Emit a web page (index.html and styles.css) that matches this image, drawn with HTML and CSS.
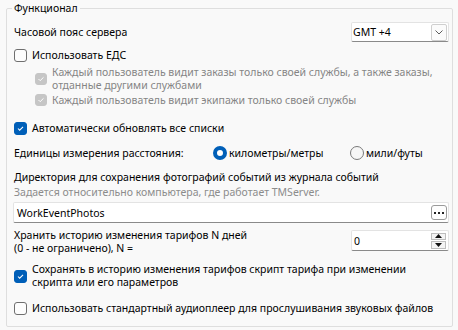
FILE: index.html
```html
<!DOCTYPE html>
<html lang="ru">
<head>
  <meta charset="UTF-8" />
  <title>Функционал</title>
  <link rel="stylesheet" href="styles.css">
</head>
<body>
  <fieldset class="group">
    <legend>Функционал</legend>

    <div class="row row-tz">
      <span>Часовой пояс сервера</span>
      <div class="combo">
        <span class="combo-text">GMT +4</span>
        <span class="combo-btn">
          <svg width="8" height="5" viewBox="0 0 8 5"><path d="M0.5 0.5 L4 4 L7.5 0.5" fill="none" stroke="#5c5c5c" stroke-width="1"/></svg>
        </span>
      </div>
    </div>

    <label class="check row-eds">
      <span class="box"></span>
      <span>Использовать ЕДС</span>
    </label>

    <label class="check sub disabled multi row-sub1">
      <span class="box small checked">
        <svg width="12" height="12" viewBox="0 0 12 12"><path d="M3 6 L5 8 L9 4" fill="none" stroke="#fff" stroke-width="1.2"/></svg>
      </span>
      <span>Каждый пользователь видит заказы только своей службы, а также заказы, отданные другими службами</span>
    </label>

    <label class="check sub disabled">
      <span class="box small checked">
        <svg width="12" height="12" viewBox="0 0 12 12"><path d="M3 6 L5 8 L9 4" fill="none" stroke="#fff" stroke-width="1.2"/></svg>
      </span>
      <span>Каждый пользователь видит экипажи только своей службы</span>
    </label>

    <label class="check row-auto">
      <span class="box checked">
        <svg width="13" height="13" viewBox="0 0 13 13"><path d="M3.5 6.5 L5.5 8.5 L9.5 4.5" fill="none" stroke="#fff" stroke-width="1.2"/></svg>
      </span>
      <span>Автоматически обновлять все списки</span>
    </label>

    <div class="row row-units">
      <span class="units-label">Единицы измерения расстояния:</span>
      <label class="radio radio-km"><span class="dot checked"></span>километры/метры</label>
      <label class="radio"><span class="dot"></span>мили/футы</label>
    </div>

    <div class="dir-label">Директория для сохранения фотографий событий из журнала событий</div>
    <div class="hint">Задается относительно компьютера, где работает TMServer.</div>

    <div class="edit">
      <span>WorkEventPhotos</span>
      <span class="ellipsis-btn">
        <svg width="10" height="3" viewBox="0 0 10 3"><rect x="0" y="0" width="2" height="2" fill="#222"/><rect x="4" y="0" width="2" height="2" fill="#222"/><rect x="8" y="0" width="2" height="2" fill="#222"/></svg>
      </span>
    </div>

    <div class="row row-history">
      <span class="history-label">Хранить историю изменения тарифов N дней<br>(0 - не ограничено), N =</span>
      <div class="spin">
        <span>0</span>
        <span class="spin-btns">
          <span class="spin-btn up"><svg width="7" height="4" viewBox="0 0 7 4"><path d="M0 4 L3.5 0 L7 4 Z" fill="#111"/></svg></span>
          <span class="spin-btn down"><svg width="7" height="4" viewBox="0 0 7 4"><path d="M0 0 L3.5 4 L7 0 Z" fill="#111"/></svg></span>
        </span>
      </div>
    </div>

    <label class="check multi row-save">
      <span class="box checked">
        <svg width="13" height="13" viewBox="0 0 13 13"><path d="M3.5 6.5 L5.5 8.5 L9.5 4.5" fill="none" stroke="#fff" stroke-width="1.2"/></svg>
      </span>
      <span>Сохранять в историю изменения тарифов скрипт тарифа при изменении скрипта или его параметров</span>
    </label>

    <label class="check row-audio">
      <span class="box"></span>
      <span>Использовать стандартный аудиоплеер для прослушивания звуковых файлов</span>
    </label>
  </fieldset>
</body>
</html>
```
FILE: styles.css
```css
:root {
  --bg: #f9f9f9;
  --text: #000000;
  --text-disabled: #858585;
  --hint: #8c8c8c;
  --accent: #005fb8;
  --group-border: #dedede;
  --input-border: #e3e3e3;
  --input-bottom: #8a8a8a;
}

* {
  box-sizing: border-box;
}

body {
  margin: 0;
  background: var(--bg);
  color: var(--text);
  font-family: "Noto Sans", sans-serif;
  font-size: 10.5px;
  line-height: 16px;
  width: 458px;
  height: 330px;
  overflow: hidden;
}

.group {
  margin: 0 5px 0 6px;
  padding: 0 3px 10px 7px;
  border: 1px solid var(--group-border);
  border-radius: 2px;
  display: flex;
  flex-direction: column;
}

.group legend {
  padding: 0 2px;
  margin-left: -2px;
  line-height: 16px;
}

.row {
  display: flex;
  align-items: center;
  justify-content: space-between;
}

.row-tz {
  margin-top: 6px;
  height: 20px;
}

/* combo box */
.combo {
  width: 98px;
  height: 20px;
  background: #fff;
  border: 1px solid var(--input-border);
  border-bottom-color: var(--input-bottom);
  border-radius: 2px;
  display: flex;
  align-items: center;
  justify-content: space-between;
  padding: 0 1px 0 1px;
}

.combo-btn {
  width: 16px;
  height: 17px;
  border: 1px solid #cfcfcf;
  border-radius: 2px;
  background: #fbfbfb;
  display: flex;
  align-items: center;
  justify-content: center;
}

/* check boxes */
.check {
  display: flex;
  align-items: center;
  gap: 5px;
  line-height: 16px;
}

.check.multi {
  line-height: 13px;
}

.check.disabled {
  color: var(--text-disabled);
}

.box {
  flex: none;
  width: 13px;
  height: 13px;
  border: 1px solid #6f6f6f;
  border-radius: 3px;
  background: #fdfdfd;
  display: flex;
  align-items: center;
  justify-content: center;
}

.box svg {
  display: block;
}

.box.small {
  width: 12px;
  height: 12px;
}

.box.checked {
  background: var(--accent);
  border-color: var(--accent);
}

.disabled .box.checked {
  background: #c6c6c6;
  border-color: #c6c6c6;
}

.sub {
  margin-left: 21px;
}

.row-eds {
  margin-top: 5px;
}

.row-sub1 {
  margin-top: 3px;
}

.row-auto {
  margin-top: 12px;
}

/* radio buttons */
.row-units {
  margin-top: 9px;
  justify-content: flex-start;
}

.units-label {
  width: 199px;
}

.radio {
  display: flex;
  align-items: center;
  gap: 2px;
}

.radio-km {
  width: 137px;
}

.dot {
  width: 14px;
  height: 14px;
  border-radius: 50%;
  border: 1px solid #7a7a7a;
  background: #f6f6f6;
}

.dot.checked {
  border: 4px solid var(--accent);
  background: #fff;
}

.dir-label {
  margin-top: 9px;
  line-height: 15px;
}

.hint {
  line-height: 15px;
  color: var(--hint);
}

/* edit with ellipsis */
.edit {
  margin: 2px 0 0 -1px;
  height: 21px;
  background: #fff;
  border: 1px solid var(--input-border);
  border-bottom-color: var(--input-bottom);
  border-radius: 2px;
  display: flex;
  align-items: center;
  justify-content: space-between;
  padding: 0 1px 0 3px;
}

.ellipsis-btn {
  width: 16px;
  height: 15px;
  border: 1px solid #9a9a9a;
  border-radius: 3px;
  background: #fdfdfd;
  display: flex;
  align-items: center;
  justify-content: center;
}

.ellipsis-btn svg {
  display: block;
  margin-top: 2px;
}

/* spin edit */
.row-history {
  margin-top: 6px;
  align-items: flex-start;
}

.history-label {
  line-height: 13px;
}

.spin {
  margin-top: 1px;
  width: 98px;
  height: 21px;
  background: #fff;
  border: 1px solid var(--input-border);
  border-bottom-color: var(--input-bottom);
  border-radius: 2px;
  display: flex;
  align-items: center;
  justify-content: space-between;
  padding: 0 2px 0 2px;
}

.spin-btns {
  display: flex;
  flex-direction: column;
  gap: 1px;
}

.spin-btn {
  width: 15px;
  height: 7px;
  border: 1px solid #bdbdbd;
  background: #f4f4f4;
  display: flex;
  align-items: center;
  justify-content: center;
}

.spin-btn.down {
  height: 8px;
}

.spin-btn svg {
  display: block;
}

.row-save {
  margin-top: 8px;
}

.row-audio {
  margin-top: 11px;
}
```
